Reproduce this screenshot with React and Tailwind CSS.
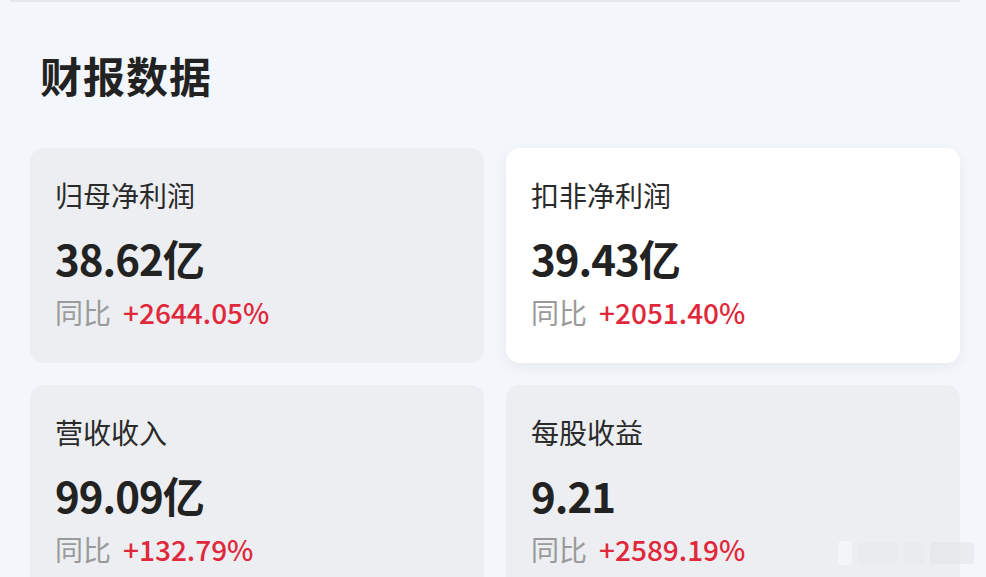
const cards = [
  { label: "归母净利润", value: "38.62亿", change: "+2644.05%", active: false },
  { label: "扣非净利润", value: "39.43亿", change: "+2051.40%", active: true },
  { label: "营收收入", value: "99.09亿", change: "+132.79%", active: false },
  { label: "每股收益", value: "9.21", change: "+2589.19%", active: false },
];

const cjk = "font-['Noto_Sans_CJK_SC','Noto_Sans',sans-serif]";

function StatCard({ label, value, change, active }) {
  return (
    <div
      className={`h-[215px] rounded-[14px] pl-[25px] pt-[28px] ${
        active ? "bg-white shadow-[0_4px_14px_rgba(30,40,70,0.06)]" : "bg-[#eceef1]"
      }`}
    >
      <div className="text-[28px] leading-[38px] text-[#2a2a2a]">{label}</div>
      <div className="mt-[18px] text-[42px] leading-[52px] font-bold tracking-[-1px] text-[#222]">
        {value}
      </div>
      <div className="mt-[8px] flex items-center gap-[12px] text-[28px] leading-[40px]">
        <span className="text-[#9a9a9a]">同比</span>
        <span className="font-medium text-[#e0283c]">{change}</span>
      </div>
    </div>
  );
}

export default function App() {
  return (
    <div className={`relative h-[577px] w-[986px] overflow-hidden bg-[#f3f6fa] ${cjk}`}>
      {/* top edge of previous panel */}
      <div className="mx-[10px] mr-[26px] h-[2px] bg-[#e3e5ef]" />

      <div className="px-[30px] pr-[26px]">
        <h1 className="ml-[10px] mt-[44px] text-[42px] leading-[58px] font-bold tracking-[1px] text-[#222]">
          财报数据
        </h1>

        <div className="mt-[44px] grid grid-cols-2 gap-x-[22px] gap-y-[22px]">
          {cards.map((c) => (
            <StatCard key={c.label} {...c} />
          ))}
        </div>
      </div>

      {/* faint watermark */}
      <div className="absolute bottom-[12px] right-[12px] flex items-center gap-[6px] opacity-50">
        <div className="h-[24px] w-[14px] rounded-sm bg-white/80" />
        <div className="h-[22px] w-[40px] rounded-sm bg-[#e9e9ec]" />
        <div className="h-[22px] w-[20px] rounded-sm bg-[#e9e9ec]" />
        <div className="h-[22px] w-[44px] rounded-sm bg-[#e4e4e7]" />
      </div>
    </div>
  );
}
